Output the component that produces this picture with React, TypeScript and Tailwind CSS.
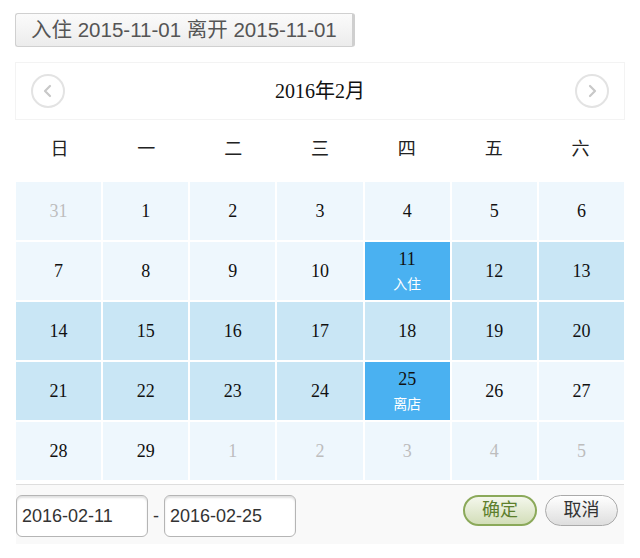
import React from 'react';

type Day = { n: number; muted?: boolean; tone?: 'light' | 'mid' | 'sel'; note?: string };

const weeks: Day[][] = [
  [{ n: 31, muted: true }, { n: 1 }, { n: 2 }, { n: 3 }, { n: 4 }, { n: 5 }, { n: 6 }],
  [{ n: 7 }, { n: 8 }, { n: 9 }, { n: 10 }, { n: 11, tone: 'sel', note: '入住' }, { n: 12, tone: 'mid' }, { n: 13, tone: 'mid' }],
  [14, 15, 16, 17, 18, 19, 20].map((n) => ({ n, tone: 'mid' as const })),
  [{ n: 21, tone: 'mid' }, { n: 22, tone: 'mid' }, { n: 23, tone: 'mid' }, { n: 24, tone: 'mid' }, { n: 25, tone: 'sel', note: '离店' }, { n: 26 }, { n: 27 }],
  [{ n: 28 }, { n: 29 }, { n: 1, muted: true }, { n: 2, muted: true }, { n: 3, muted: true }, { n: 4, muted: true }, { n: 5, muted: true }],
];

const weekdays = ['日', '一', '二', '三', '四', '五', '六'];

const sans = "font-['Liberation_Sans','Noto_Sans_CJK_SC',sans-serif]";
const serif = "font-['Liberation_Serif','Noto_Sans_CJK_SC',serif]";

function Chevron({ dir }: { dir: 'left' | 'right' }) {
  return (
    <div className="w-[34px] h-[34px] rounded-full border-2 border-[#e3e3e3] flex items-center justify-center">
      <svg width="14" height="16" viewBox="0 0 14 16">
        {dir === 'left' ? (
          <path d="M9 3 L4 8 L9 13" fill="none" stroke="#c8c8c8" strokeWidth="2.2" strokeLinecap="round" strokeLinejoin="round" />
        ) : (
          <path d="M5 3 L10 8 L5 13" fill="none" stroke="#c8c8c8" strokeWidth="2.2" strokeLinecap="round" strokeLinejoin="round" />
        )}
      </svg>
    </div>
  );
}

function Cell({ d }: { d: Day }) {
  const bg = d.tone === 'sel' ? 'bg-[#4ab1f1]' : d.tone === 'mid' ? 'bg-[#c9e6f5]' : 'bg-[#eef7fd]';
  return (
    <div className={`h-[58px] ${bg} flex flex-col items-center justify-center`}>
      <span className={`${serif} text-[18px] leading-[20px] ${d.muted ? 'text-[#bdbdbd]' : 'text-[#111]'}`}>{d.n}</span>
      {d.note && <span className={`${sans} text-[14px] leading-[18px] mt-[6px] text-white`}>{d.note}</span>}
    </div>
  );
}

export default function App() {
  return (
    <div className="w-[640px] h-[558px] bg-white overflow-hidden">
      <div className="pt-[13px] pl-[15px]">
        <div className={`${sans} w-[340px] h-[34px] rounded-[3px] border border-[#d0d0d0] border-r-[3px] border-r-[#cfcfcf] bg-gradient-to-b from-[#fbfbfb] to-[#ececec] flex items-center pl-[15px] text-[20.5px] text-[#555]`}>
          入住 2015-11-01 离开 2015-11-01
        </div>
      </div>

      <div className="mx-[15px] mt-[15px] h-[58px] border border-[#f3f3f3] flex items-center justify-between px-[15px]">
        <Chevron dir="left" />
        <span className={`${serif} text-[20px] text-[#111]`}>2016年2月</span>
        <Chevron dir="right" />
      </div>

      <div className={`${sans} mx-[16px] h-[62px] grid grid-cols-7 items-center pb-[4px]`}>
        {weekdays.map((w) => (
          <div key={w} className="text-center text-[18px] text-[#222]">{w}</div>
        ))}
      </div>

      <div className="mx-[16px] grid grid-cols-7 gap-[2px]">
        {weeks.flat().map((d, i) => (
          <Cell key={i} d={d} />
        ))}
      </div>

      <div className="mt-[4px] mx-[16px] h-[60px] bg-[#f9f9f9] border-t border-[#dedede] flex items-start pt-[10px]">
        <div className={`${sans} w-[132px] h-[42px] rounded-[6px] border border-[#b5b5b5] bg-white shadow-[inset_0_2px_2px_rgba(0,0,0,0.12)] flex items-center pl-[5px] text-[18px] text-[#333]`}>
          2016-02-11
        </div>
        <span className={`${sans} w-[16px] h-[42px] flex items-center justify-center text-[18px] text-[#333]`}>-</span>
        <div className={`${sans} w-[132px] h-[42px] rounded-[6px] border border-[#b5b5b5] bg-white shadow-[inset_0_2px_2px_rgba(0,0,0,0.12)] flex items-center pl-[5px] text-[18px] text-[#333]`}>
          2016-02-25
        </div>
        <div className="flex-1" />
        <button className={`${sans} w-[74px] h-[31px] rounded-full border-2 border-[#8ba95a] bg-gradient-to-b from-[#f4f7ec] to-[#d3deb9] text-[18px] text-[#5d7f2c] flex items-center justify-center`}>
          确定
        </button>
        <button className={`${sans} ml-[8px] mr-[6px] w-[73px] h-[31px] rounded-full border border-[#aaaaaa] bg-gradient-to-b from-[#ffffff] to-[#dedede] text-[18px] text-[#333] flex items-center justify-center`}>
          取消
        </button>
      </div>
    </div>
  );
}
